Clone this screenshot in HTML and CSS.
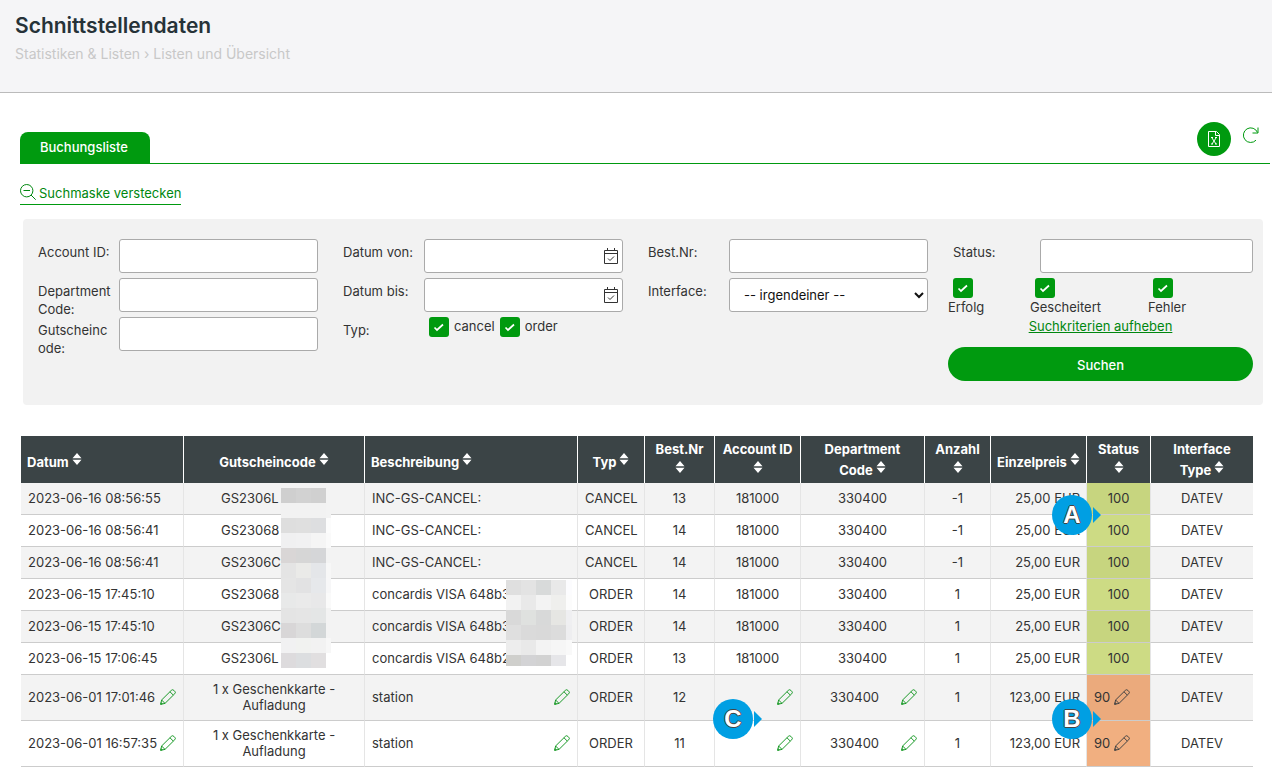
FILE: index.html
```
<!DOCTYPE html>
<html lang="de">
<head>
  <meta charset="UTF-8">
  <meta name="viewport" content="width=device-width, initial-scale=1.0">
  <title>Schnittstellendaten</title>
  <link rel="stylesheet" href="styles.css">
</head>
<body>
  <svg class="symbols" aria-hidden="true">
    <symbol id="pencil" viewBox="0 0 16 16">
      <path d="M.7 15.3 1.6 11 11.3 1.4a1.8 1.8 0 0 1 2.6 0l.8.8a1.8 1.8 0 0 1 0 2.6L5 14.4zM1.6 11 5 14.4M10 2.8l3.3 3.3M.7 15.3l1.6-.5-1.1-1.1z"/>
    </symbol>
    <symbol id="sort" viewBox="0 0 10 12">
      <path d="M5 0 9.5 5.3H.5zM5 12 .5 6.7h9z"/>
    </symbol>
    <symbol id="calendar" viewBox="0 0 16 17">
      <path d="M1.5 2.5h13v13h-13zM1.5 5.5h13M4.5 0v3M11.5 0v3"/>
      <path d="m5 10.5 2 2 4-4"/>
    </symbol>
  </svg>

  <header class="page-header">
    <h1>Schnittstellendaten</h1>
    <p class="breadcrumb">Statistiken &amp; Listen › Listen und Übersicht</p>
  </header>

  <main>
    <div class="tabs">
      <a class="tab" href="#liste">Buchungsliste</a>
      <div class="tools">
        <button class="excel" type="button" aria-label="Excel">
          <svg width="14" height="18" viewBox="0 0 14 18"><path d="M1.5 1.5h8l3 3v12h-11zM8.5 1.5v4h4"/><path d="m5 8 4 6M9 8l-4 6M4 7.5h2M8 7.5h2M4 14h2M8 14h2"/></svg>
        </button>
        <button class="refresh" type="button" aria-label="Aktualisieren">
          <svg width="17" height="17" viewBox="0 0 17 17"><path d="M14 13.2A7.3 7.3 0 1 1 15.5 5.500M16 .5v5.500h-5.500"/></svg>
        </button>
      </div>
    </div>

    <a class="toggle" href="#suche">
      <svg width="16" height="16" viewBox="0 0 16 16"><circle cx="6.700" cy="6.700" r="6.200"/><path d="M3.500 6.500h6.500M11 11l4.700 4.700"/></svg>
      <span>Suchmaske verstecken</span>
    </a>

    <form class="search" id="suche">
      <div class="col">
        <div class="field"><label for="account">Account ID:</label><input type="text" id="account"></div>
        <div class="field"><label for="department">Department Code:</label><input type="text" id="department"></div>
        <div class="field"><label for="code">Gutscheincode:</label><input type="text" id="code"></div>
      </div>
      <div class="col">
        <div class="field">
          <label for="von">Datum von:</label>
          <div class="date"><input type="text" id="von"><svg><use href="#calendar"/></svg></div>
        </div>
        <div class="field">
          <label for="bis">Datum bis:</label>
          <div class="date"><input type="text" id="bis"><svg><use href="#calendar"/></svg></div>
        </div>
        <div class="field">
          <span class="caption">Typ:</span>
          <div class="types">
            <label><input type="checkbox" checked>cancel</label>
            <label><input type="checkbox" checked>order</label>
          </div>
        </div>
      </div>
      <div class="col">
        <div class="field"><label for="nr">Best.Nr:</label><input type="text" id="nr"></div>
        <div class="field">
          <label for="interface">Interface:</label>
          <select id="interface"><option>-- irgendeiner --</option></select>
        </div>
      </div>
      <div class="col last">
        <div class="field"><label for="status">Status:</label><input type="text" id="status"></div>
        <div class="states">
          <label><input type="checkbox" checked>Erfolg</label>
          <label><input type="checkbox" checked>Gescheitert</label>
          <label><input type="checkbox" checked>Fehler</label>
        </div>
        <a class="reset" href="#suche">Suchkriterien aufheben</a>
        <button class="submit" type="button">Suchen</button>
      </div>
    </form>

    <table id="liste">
      <colgroup>
        <col class="w-date"><col class="w-code"><col class="w-text"><col class="w-type"><col class="w-nr"><col class="w-account"><col class="w-dep"><col class="w-count"><col class="w-price"><col class="w-status"><col class="w-interface">
      </colgroup>
      <thead>
        <tr>
          <th class="left">Datum <svg class="sort"><use href="#sort"/></svg></th>
          <th>Gutscheincode <svg class="sort"><use href="#sort"/></svg></th>
          <th class="left">Beschreibung <svg class="sort"><use href="#sort"/></svg></th>
          <th>Typ <svg class="sort"><use href="#sort"/></svg></th>
          <th>Best.Nr <svg class="sort"><use href="#sort"/></svg></th>
          <th>Account ID <svg class="sort"><use href="#sort"/></svg></th>
          <th>Department Code <svg class="sort"><use href="#sort"/></svg></th>
          <th>Anzahl <svg class="sort"><use href="#sort"/></svg></th>
          <th>Einzelpreis <svg class="sort"><use href="#sort"/></svg></th>
          <th>Status <svg class="sort"><use href="#sort"/></svg></th>
          <th>Interface Type <svg class="sort"><use href="#sort"/></svg></th>
        </tr>
      </thead>
      <tbody>
        <tr>
          <td class="left">2023-06-16 08:56:55</td>
          <td class="code">GS2306L<svg class="mosaic mosaic-code" id="mosaic-code" width="50" height="180"></svg></td>
          <td class="left">INC-GS-CANCEL:</td>
          <td>CANCEL</td><td>13</td><td>181000</td><td>330400</td><td>-1</td>
          <td class="right">25,00 EUR</td>
          <td class="ok">100<span class="pin pin-a">A</span></td>
          <td>DATEV</td>
        </tr>
        <tr>
          <td class="left">2023-06-16 08:56:41</td>
          <td class="code">GS23068</td>
          <td class="left">INC-GS-CANCEL:</td>
          <td>CANCEL</td><td>14</td><td>181000</td><td>330400</td><td>-1</td>
          <td class="right">25,00 EUR</td><td class="ok">100</td><td>DATEV</td>
        </tr>
        <tr>
          <td class="left">2023-06-16 08:56:41</td>
          <td class="code">GS2306C</td>
          <td class="left">INC-GS-CANCEL:</td>
          <td>CANCEL</td><td>14</td><td>181000</td><td>330400</td><td>-1</td>
          <td class="right">25,00 EUR</td><td class="ok">100</td><td>DATEV</td>
        </tr>
        <tr>
          <td class="left">2023-06-15 17:45:10</td>
          <td class="code">GS23068</td>
          <td class="left">concardis VISA 648b3<svg class="mosaic mosaic-text" id="mosaic-text" width="66" height="86"></svg></td>
          <td>ORDER</td><td>14</td><td>181000</td><td>330400</td><td>1</td>
          <td class="right">25,00 EUR</td><td class="ok">100</td><td>DATEV</td>
        </tr>
        <tr>
          <td class="left">2023-06-15 17:45:10</td>
          <td class="code">GS2306C</td>
          <td class="left">concardis VISA 648b3</td>
          <td>ORDER</td><td>14</td><td>181000</td><td>330400</td><td>1</td>
          <td class="right">25,00 EUR</td><td class="ok">100</td><td>DATEV</td>
        </tr>
        <tr>
          <td class="left">2023-06-15 17:06:45</td>
          <td class="code">GS2306L</td>
          <td class="left">concardis VISA 648b2</td>
          <td>ORDER</td><td>13</td><td>181000</td><td>330400</td><td>1</td>
          <td class="right">25,00 EUR</td><td class="ok">100</td><td>DATEV</td>
        </tr>
        <tr class="tall">
          <td><div class="edit"><span>2023-06-01 17:01:46</span><button type="button" aria-label="Bearbeiten"><svg><use href="#pencil"/></svg></button></div></td>
          <td>1 x Geschenkkarte -<br>Aufladung</td>
          <td><div class="edit"><span>station</span><button type="button" aria-label="Bearbeiten"><svg><use href="#pencil"/></svg></button></div></td>
          <td>ORDER</td><td>12</td>
          <td><span class="pin pin-c">C</span><div class="edit"><span></span><button type="button" aria-label="Bearbeiten"><svg><use href="#pencil"/></svg></button></div></td>
          <td><div class="edit center"><span>330400</span><button type="button" aria-label="Bearbeiten"><svg><use href="#pencil"/></svg></button></div></td>
          <td>1</td>
          <td class="right">123,00 EUR</td>
          <td class="error"><div class="edit"><span>90</span><button type="button" aria-label="Bearbeiten"><svg><use href="#pencil"/></svg></button></div><span class="pin pin-b">B</span></td>
          <td>DATEV</td>
        </tr>
        <tr class="tall">
          <td><div class="edit"><span>2023-06-01 16:57:35</span><button type="button" aria-label="Bearbeiten"><svg><use href="#pencil"/></svg></button></div></td>
          <td>1 x Geschenkkarte -<br>Aufladung</td>
          <td><div class="edit"><span>station</span><button type="button" aria-label="Bearbeiten"><svg><use href="#pencil"/></svg></button></div></td>
          <td>ORDER</td><td>11</td>
          <td><div class="edit"><span></span><button type="button" aria-label="Bearbeiten"><svg><use href="#pencil"/></svg></button></div></td>
          <td><div class="edit center"><span>330400</span><button type="button" aria-label="Bearbeiten"><svg><use href="#pencil"/></svg></button></div></td>
          <td>1</td>
          <td class="right">123,00 EUR</td>
          <td class="error"><div class="edit"><span>90</span><button type="button" aria-label="Bearbeiten"><svg><use href="#pencil"/></svg></button></div></td>
          <td>DATEV</td>
        </tr>
      </tbody>
    </table>
  </main>

  <script>
    // grey tiles over the private part of a column, one row of tiles per line
    const codeTiles = [
      "cfcfcf d2d2d2 d0d0d0",
      "f2f2f2 f2f2f2 f2f2f2 f3f3f3",
      "dedede dfdfdf dddee0 fcfcfc",
      "f0f0f1 f1f1f2 f5f5f5 fafafa",
      "d9d6d6 d6d6d6 d5d6d8",
      "e4e4e4 eaeae8 e4e6e9 f7f7f7",
      "e5e5e5 e2e2e3 e6e8eb f7f7f8",
      "e8e9e9 eaeaea e8e8e9 fafafa",
      "e4e4e4 e5e5e5 e4e6e6 f3f3f3",
      "d8d6d7 dddddd d3d7d8 f3f3f3",
      "f1f1f2 f1f2f0 f2f2f2 f7f7f7",
      "dddbdd dcdee0 e1dfe0"
    ];
    const textTiles = [
      "dfdfdf e3e3e3 d8dada e9e9e9 fcfcfe",
      "f2f2f2 e9e9e9 f3f3f3 efefed fcfcfc",
      "d9d9d9 dfe1df d8d9d9 e6e6e3 efeff1",
      "dfdfdf dadada d9d9d9 dcdcdc eeeef0",
      "ededed e9e9e9 f3f3f3 f6f6f6 f9f9f9",
      "cfcfcc d3d3d5 d2d2d2 e6e6e9"
    ];

    function drawTiles(id, rows){
      const svg = document.getElementById(id);
      rows.forEach(function(row, y){
        row.split(" ").forEach(function(color, x){
          const tile = document.createElementNS("http://www.w3.org/2000/svg", "rect");
          tile.setAttribute("x", x * 15);
          tile.setAttribute("y", y * 15);
          tile.setAttribute("width", 15);
          tile.setAttribute("height", 15);
          tile.setAttribute("fill", "#" + color);
          svg.appendChild(tile);
        });
      });
    }

    drawTiles("mosaic-code", codeTiles);
    drawTiles("mosaic-text", textTiles);
  </script>
</body>
</html>
```
FILE: styles.css
```
*{margin: 0; padding: 0; box-sizing: border-box;}

body{
  font-family: Inter, "Liberation Sans", sans-serif;
  font-size: 13px;
  line-height: 18px;
  color: #333;
  background-color: #fff;
}

button, input, select{
  font: inherit;
  color: inherit;
}

button{
  border: 0;
  background: none;
  cursor: pointer;
}

svg{
  fill: none;
  stroke: currentColor;
}

.symbols{
  position: absolute;
  width: 0;
  height: 0;
}

.page-header{
  height: 93px;
  padding: 13px 15px;
  background-color: #f5f5f7;
  border-bottom: 1px solid #bbb;
}

.page-header h1{
  font-size: 21px;
  line-height: 26px;
  font-weight: 600;
  color: #263238;
}

.breadcrumb{
  margin-top: 6px;
  font-size: 14px;
  color: #c8c8c8;
}

/* tabs */
.tabs{
  display: flex;
  justify-content: space-between;
  align-items: flex-end;
  margin: 29px 2px 0 20px;
  border-bottom: 1px solid #009a0f;
}

.tab{
  height: 31px;
  padding: 6px 22px 6px 20px;
  border-radius: 8px 8px 0 0;
  background-color: #009a0f;
  color: #fff;
  font-weight: 500;
  text-decoration: none;
}

.tools{
  display: flex;
  gap: 11px;
  padding: 0 11px 7px 0;
}

.excel{
  display: flex;
  align-items: center;
  justify-content: center;
  width: 34px;
  height: 34px;
  margin-right: 0;
  border-radius: 50%;
  background-color: #009a0f;
  color: #fff;
}

.refresh{
  height: 31px;
  color: #009a0f;
}

/* search form */
.toggle{
  display: flex;
  gap: 3px;
  width: fit-content;
  height: 21px;
  margin: 20px 0 0 20px;
  border-bottom: 1px solid #009a0f;
  color: #00870f;
  text-decoration: none;
}

.search{
  display: grid;
  grid-template-columns: 285fr 285fr 280fr 305fr;
  column-gap: 20px;
  margin: 14px 9px 0 23px;
  padding: 20px 10px 24px 15px;
  border-radius: 4px;
  background-color: #f2f2f2;
}

.field{
  display: flex;
  height: 39px;
  padding-right: 5px;
}

.col:nth-child(n+3) .field{
  padding-right: 0;
}

.field > label, .caption{
  flex: none;
  width: 76px;
  margin-right: 5px;
  padding-top: 4px;
  word-break: break-word;
}

.last .field > label{
  width: 87px;
  padding-left: 5px;
}

input[type="text"], select{
  flex: 1;
  width: 100%;
  min-width: 0;
  height: 34px;
  border: 1px solid #aaa;
  border-radius: 3px;
  background-color: #fff;
}

select{
  padding: 0 10px;
  color: #111;
}

.date{
  position: relative;
  flex: 1;
}

.date svg{
  position: absolute;
  top: 9px;
  right: 4px;
  width: 16px;
  height: 17px;
}

input[type="checkbox"]{
  appearance: none;
  width: 20px;
  height: 20px;
  border-radius: 3px;
  background: #009a0f url("data:image/svg+xml,%3Csvg xmlns='http://www.w3.org/2000/svg' viewBox='0 0 20 20'%3E%3Cpath d='m5.500 10.500 2.500 2.500 6-5.500' fill='none' stroke='white' stroke-width='1.700'/%3E%3C/svg%3E");
}

.types{
  display: flex;
  gap: 5px;
  padding-left: 5px;
}

.types label{
  display: flex;
  gap: 5px;
  height: 20px;
}

.states{
  display: grid;
  grid-template-columns: 82fr 118fr 105fr;
}

.states label{
  display: flex;
  flex-direction: column;
}

.states input{
  margin-left: 5px;
}

.reset{
  display: block;
  margin-top: 1px;
  text-align: center;
  color: #00870f;
}

.submit{
  display: block;
  width: 100%;
  height: 34px;
  margin-top: 12px;
  padding-top: 1px;
  border-radius: 17px;
  background-color: #009a0f;
  color: #fff;
  font-weight: 500;
}

/* list */
table{
  width: calc(100% - 40px);
  margin: 31px 19px 0 21px;
  table-layout: fixed;
  border-collapse: separate;
  border-spacing: 0;
  line-height: 16px;
  text-align: center;
}

.w-date{width: 163px;}
.w-code{width: 181px;}
.w-text{width: 213px;}
.w-type{width: 67px;}
.w-nr{width: 70px;}
.w-account{width: 86px;}
.w-dep{width: 124px;}
.w-count{width: 66px;}
.w-price{width: 96px;}
.w-status{width: 64px;}
.w-interface{width: 102px;}

th{
  height: 47px;
  padding: 0 6px;
  border-right: 1px solid #fff;
  background-color: #3b4446;
  color: #fff;
  font-weight: 700;
}

td{
  position: relative;
  height: 32px;
  padding: 0 7px 2px;
  border-right: 1px solid #e5e5e5;
  border-bottom: 1px solid #ccc;
}

th:last-child, td:last-child{
  border-right: 0;
}

.left{
  text-align: left;
}

.right{
  padding-right: 6px;
  padding-left: 6px;
  text-align: right;
}

td.code{
  padding-left: 37px;
  text-align: left;
}

.sort{
  width: 10px;
  height: 12px;
  margin-top: 4px;
  vertical-align: 2px;
  fill: #fff;
  stroke: none;
}

tbody tr:nth-child(odd){
  background-color: #f3f3f3;
}

.ok{background-color: #cddb84;}
.error{background-color: #f1af80;}
tr:nth-child(odd) .ok{background-color: #c7d57f;}
tr:nth-child(odd) .error{background-color: #ebaa7c;}

.tall td{
  height: 46px;
}

.edit{
  display: flex;
  justify-content: space-between;
  align-items: center;
}

.center span{
  flex: 1;
}

.edit button{
  flex: none;
  width: 16px;
  height: 16px;
  color: #1a9a28;
}

.edit svg{
  display: block;
  width: 16px;
  height: 16px;
}

.error .edit{
  justify-content: flex-start;
  gap: 4px;
}

.error .edit button{
  color: #444;
}

.mosaic{
  position: absolute;
  z-index: 1;
  stroke: none;
  shape-rendering: crispEdges;
}

.mosaic-code{
  top: 5px;
  left: 97px;
}

.mosaic-text{
  top: 1px;
  left: 141px;
}

/* markers over the list */
.pin{
  position: absolute;
  z-index: 2;
  width: 40px;
  height: 40px;
  border-radius: 50%;
  background-color: #009fe3;
  color: #fff;
  font: bold 24px/40px "Liberation Sans", sans-serif;
  text-align: center;
  text-shadow: 1px 0 #444, -1px 0 #444, 0 1px #444, 0 -1px #444;
}

.pin::after{
  content: "";
  position: absolute;
  top: 12px;
  left: 41px;
  border: 8px solid transparent;
  border-right: 0;
  border-left-color: #009fe3;
}

.pin-a{
  top: 12px;
  left: -35px;
}

.pin-b{
  top: 24px;
  left: -35px;
}

.pin-c{
  top: 24px;
  left: -2px;
}
```
